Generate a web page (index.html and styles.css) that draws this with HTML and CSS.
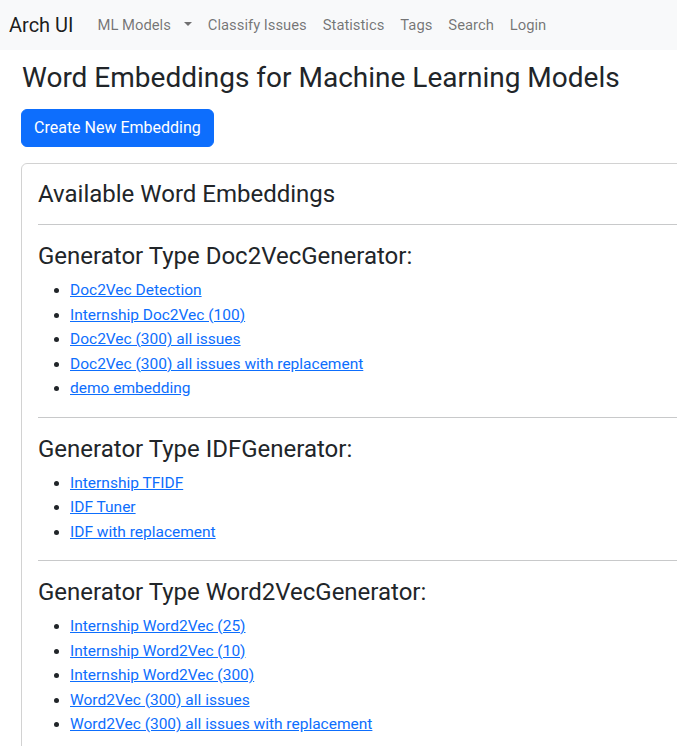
FILE: index.html
```html
<!DOCTYPE html>
<html lang="en">
<head>
<meta charset="utf-8">
<title>Word Embeddings</title>
<link rel="stylesheet" href="styles.css">
</head>
<body>
<nav class="navbar">
  <a class="brand" href="#">Arch UI</a>
  <ul class="nav">
    <li><a class="nav-link dropdown" href="#">ML Models</a></li>
    <li><a class="nav-link" href="#">Classify Issues</a></li>
    <li><a class="nav-link" href="#">Statistics</a></li>
    <li><a class="nav-link" href="#">Tags</a></li>
    <li><a class="nav-link" href="#">Search</a></li>
    <li><a class="nav-link" href="#">Login</a></li>
  </ul>
</nav>
<main class="page">
  <h1 class="title">Word Embeddings for Machine Learning Models</h1>
  <a class="btn" href="#">Create New Embedding</a>
  <section class="card">
    <h4 class="heading">Available Word Embeddings</h4>
    <hr>
    <h4 class="heading">Generator Type Doc2VecGenerator:</h4>
    <ul class="list">
      <li><a href="#">Doc2Vec Detection</a></li>
      <li><a href="#">Internship Doc2Vec (100)</a></li>
      <li><a href="#">Doc2Vec (300) all issues</a></li>
      <li><a href="#">Doc2Vec (300) all issues with replacement</a></li>
      <li><a href="#">demo embedding</a></li>
    </ul>
    <hr>
    <h4 class="heading">Generator Type IDFGenerator:</h4>
    <ul class="list">
      <li><a href="#">Internship TFIDF</a></li>
      <li><a href="#">IDF Tuner</a></li>
      <li><a href="#">IDF with replacement</a></li>
    </ul>
    <hr>
    <h4 class="heading">Generator Type Word2VecGenerator:</h4>
    <ul class="list">
      <li><a href="#">Internship Word2Vec (25)</a></li>
      <li><a href="#">Internship Word2Vec (10)</a></li>
      <li><a href="#">Internship Word2Vec (300)</a></li>
      <li><a href="#">Word2Vec (300) all issues</a></li>
      <li><a href="#">Word2Vec (300) all issues with replacement</a></li>
    </ul>
    <hr>
  </section>
</main>
</body>
</html>
```

FILE: styles.css
```css
html { overflow: hidden; }
body {
  margin: 0;
  font-family: Roboto, "Liberation Sans", sans-serif;
  font-size: 16px;
  line-height: 1.5;
  color: #212529;
  background: #fff;
}
a { color: #0d6efd; }

.navbar {
  display: flex;
  align-items: center;
  height: 50px;
  padding: 0 9px;
  background: #f8f9fa;
}
.brand {
  font-size: 20px;
  line-height: 30px;
  color: rgba(0,0,0,.9);
  text-decoration: none;
  margin-right: 16px;
}
.nav {
  display: flex;
  list-style: none;
  margin: 0;
  padding: 0;
}
.nav-link {
  display: block;
  padding: 8px;
  font-size: 14.8px;
  line-height: 24px;
  color: rgba(0,0,0,.55);
  text-decoration: none;
}
.dropdown::after {
  content: "";
  display: inline-block;
  margin-left: 13px;
  vertical-align: 4px;
  border-top: 4px solid;
  border-left: 4px solid transparent;
  border-right: 4px solid transparent;
}

.page {
  padding: 11px 0 0 21px;
}
.title {
  margin: 0 0 15px;
  font-size: 28px;
  font-weight: 400;
  line-height: 33px;
  padding-left: 1px;
  white-space: nowrap;
}
.btn {
  display: block;
  width: max-content;
  padding: 6px 12px;
  border: 1px solid #0d6efd;
  background: #0d6efd;
  color: #fff;
  text-decoration: none;
  border-radius: 6px;
  line-height: 24px;
  margin-bottom: 16px;
}
.card {
  width: 700px;
  border: 1px solid rgba(0,0,0,.175);
  border-radius: 6px;
  padding: 16px;
}
.heading {
  margin: 0 0 8px;
  font-size: 24px;
  font-weight: 400;
  line-height: 28px;
}
hr {
  margin: 16px 0 17px;
  border: 0;
  border-top: 1px solid #c8c9ca;
}
.list {
  margin: 0 0 16px;
  padding-left: 32px;
  font-size: 15.5px;
  line-height: 24.5px;
}
```
